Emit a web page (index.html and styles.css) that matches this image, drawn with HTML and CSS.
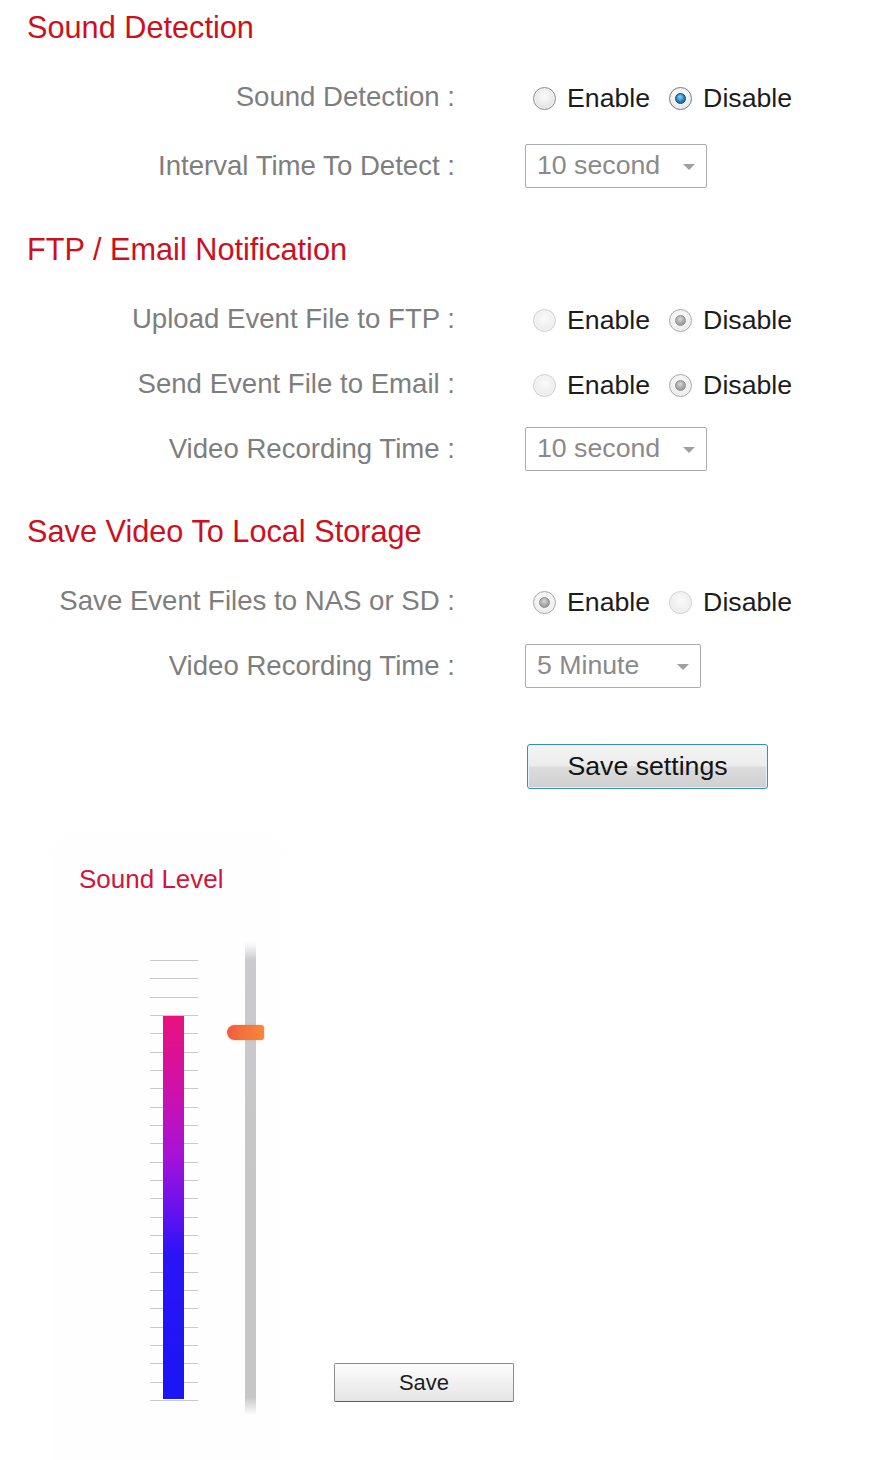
FILE: index.html
```html
<!DOCTYPE html>
<html lang="en">
<head>
<meta charset="utf-8">
<title>Sound Detection</title>
<link rel="stylesheet" href="styles.css">
</head>
<body>
<div class="page">
  <section class="section">
    <h2 class="section-title">Sound Detection</h2>
    <div class="rows">
      <div class="row">
        <div class="label">Sound Detection :</div>
        <div class="control radios">
          <label class="opt"><span class="radio"></span>Enable</label>
          <label class="opt"><span class="radio radio-on"></span>Disable</label>
        </div>
      </div>
      <div class="row row-gap">
        <div class="label">Interval Time To Detect :</div>
        <div class="control">
          <div class="select"><span class="select-value">10 second</span><span class="select-arrow"></span></div>
        </div>
      </div>
    </div>
  </section>

  <section class="section section-b">
    <h2 class="section-title">FTP / Email Notification</h2>
    <div class="rows">
      <div class="row">
        <div class="label">Upload Event File to FTP :</div>
        <div class="control radios">
          <label class="opt"><span class="radio radio-dis"></span>Enable</label>
          <label class="opt"><span class="radio radio-dis-on"></span>Disable</label>
        </div>
      </div>
      <div class="row">
        <div class="label">Send Event File to Email :</div>
        <div class="control radios">
          <label class="opt"><span class="radio radio-dis"></span>Enable</label>
          <label class="opt"><span class="radio radio-dis-on"></span>Disable</label>
        </div>
      </div>
      <div class="row">
        <div class="label">Video Recording Time :</div>
        <div class="control">
          <div class="select"><span class="select-value">10 second</span><span class="select-arrow"></span></div>
        </div>
      </div>
    </div>
  </section>

  <section class="section">
    <h2 class="section-title">Save Video To Local Storage</h2>
    <div class="rows">
      <div class="row">
        <div class="label">Save Event Files to NAS or SD :</div>
        <div class="control radios">
          <label class="opt"><span class="radio radio-dis-on"></span>Enable</label>
          <label class="opt"><span class="radio radio-dis"></span>Disable</label>
        </div>
      </div>
      <div class="row">
        <div class="label">Video Recording Time :</div>
        <div class="control">
          <div class="select select-narrow"><span class="select-value">5 Minute</span><span class="select-arrow"></span></div>
        </div>
      </div>
    </div>
  </section>

  <div class="actions">
    <button class="btn-primary" type="button">Save settings</button>
  </div>

  <div class="level-panel">
    <div class="level-title">Sound Level</div>
    <div class="level-body">
      <div class="meter">
        <div class="meter-bar" style="height:383px"></div>
      </div>
      <div class="slider">
        <div class="slider-track"></div>
        <div class="slider-thumb"></div>
      </div>
      <button class="btn-save" type="button">Save</button>
    </div>
  </div>
</div>
</body>
</html>
```

FILE: styles.css
```css
html, body {
  margin: 0;
  padding: 0;
  background: #ffffff;
}

body {
  font-family: "Liberation Sans", Arial, sans-serif;
}

.page {
  padding-top: 8px;
  width: 879px;
}

.section {
  margin-bottom: 32px;
}

.section-b {
  margin-bottom: 31px;
}

.section-title {
  margin: 0;
  padding-left: 27px;
  height: 40px;
  line-height: 40px;
  font-size: 30.7px;
  font-weight: normal;
  color: #cc1020;
}

.rows {
  margin-top: 16px;
  display: flex;
  flex-direction: column;
}

.row {
  display: grid;
  grid-template-columns: 455px 1fr;
  column-gap: 70px;
  align-items: center;
  height: 65px;
}

.row-gap {
  margin-top: 4px;
}

.label {
  text-align: right;
  font-size: 27.6px;
  color: #7e7e7e;
  white-space: nowrap;
}

.control {
  display: flex;
  align-items: center;
}

.radios {
  padding-left: 8px;
  gap: 19px;
  padding-top: 3px;
}

.opt {
  display: flex;
  align-items: center;
  gap: 11px;
  font-size: 26.7px;
  color: #1c1c1c;
}

.radio {
  position: relative;
  width: 21px;
  height: 21px;
  border-radius: 50%;
  border: 1px solid #8d8d8d;
  background: radial-gradient(circle at 50% 40%, #fbfbfb 0%, #e9e9e9 55%, #cfcfcf 100%);
  box-shadow: inset 0 0 0 1px #f4f4f4;
  flex: none;
}

.radio-on::after,
.radio-dis-on::after {
  content: "";
  position: absolute;
  left: 5px;
  top: 5px;
  width: 9px;
  height: 9px;
  border-radius: 50%;
}

.radio-on {
  border-color: #6f7a86;
  background: radial-gradient(circle at 50% 40%, #ffffff 0%, #eef1f4 55%, #c7ccd1 100%);
}

.radio-on::after {
  background: radial-gradient(circle at 45% 35%, #8fd0f5 0%, #2f8fcb 45%, #16507e 100%);
  border: 1px solid #1c3a58;
}

.radio-dis {
  border-color: #cfcfcf;
  background: radial-gradient(circle at 50% 40%, #fafafa 0%, #efefef 60%, #e1e1e1 100%);
}

.radio-dis-on {
  border-color: #a8a8a8;
  background: radial-gradient(circle at 50% 40%, #fdfdfd 0%, #efefef 60%, #d9d9d9 100%);
}

.radio-dis-on::after {
  background: radial-gradient(circle at 45% 35%, #d8d8d8 0%, #a6a6a6 55%, #8a8a8a 100%);
  border: 1px solid #8f8f8f;
}

.select {
  box-sizing: border-box;
  width: 182px;
  height: 44px;
  border: 1px solid #ababab;
  border-radius: 2px;
  display: flex;
  align-items: center;
  justify-content: space-between;
  padding: 0 11px 0 11px;
  background: #ffffff;
}

.select-narrow {
  width: 176px;
}

.select-value {
  font-size: 26.7px;
  color: #8a8a8a;
}

.select-arrow {
  width: 0;
  height: 0;
  border-left: 6px solid transparent;
  border-right: 6px solid transparent;
  border-top: 6px solid #a0a0a0;
  margin-top: 3px;
}

.actions {
  margin-top: 46px;
  padding-left: 527px;
  display: flex;
}

.btn-primary {
  box-sizing: border-box;
  width: 241px;
  height: 45px;
  border: 1px solid #3c8cc4;
  border-radius: 3px;
  background: linear-gradient(to bottom, #f4f4f4 0%, #ececec 48%, #dcdcdc 52%, #cfcfcf 100%);
  box-shadow: inset 0 0 0 1px #e4f2fb;
  font-family: "Liberation Sans", Arial, sans-serif;
  font-size: 26.7px;
  color: #141414;
  padding: 0;
}

.level-panel {
  margin-top: 52px;
  margin-left: 60px;
  width: 215px;
  height: 620px;
  padding-top: 18px;
  background: #fffefe;
  box-shadow: 0 0 16px rgba(220, 200, 200, 0.06);
}

.level-title {
  padding-left: 19px;
  height: 40px;
  line-height: 40px;
  font-size: 26px;
  color: #d0163c;
}

.level-body {
  margin-top: 43px;
  display: flex;
  align-items: flex-end;
  padding-left: 90px;
  width: 460px;
}

.meter {
  width: 48px;
  height: 441px;
  margin-bottom: 14px;
  display: flex;
  flex-direction: column;
  justify-content: flex-end;
  background: repeating-linear-gradient(to bottom, rgba(150, 150, 150, 0.5) 0px, rgba(150, 150, 150, 0.5) 1px, transparent 1px, transparent 18.33px);
}

.meter-bar {
  width: 21px;
  margin-left: 13px;
  margin-bottom: 2px;
  background: linear-gradient(to bottom, #e8127c 0%, #d011a8 18%, #a812d6 36%, #6a12ee 50%, #2a14f6 62%, #1a16f4 100%);
}

.slider {
  position: relative;
  width: 37px;
  height: 473px;
  margin-left: 29px;
}

.slider-track {
  width: 11px;
  height: 100%;
  margin-left: 18px;
  background: linear-gradient(to bottom, rgba(200, 200, 206, 0) 0px, #cbcbcf 18px, #c6c6c6 50%, #c6c6c6 calc(100% - 18px), rgba(200, 200, 200, 0) 100%);
}

.slider-thumb {
  position: absolute;
  left: 0;
  top: 83px;
  width: 37px;
  height: 15px;
  border-radius: 8px 3px 3px 8px;
  background: linear-gradient(to right, #ee5a44 0%, #f3703c 40%, #f5893a 100%);
  box-shadow: 0 0 2px rgba(240, 120, 60, 0.5);
}

.btn-save {
  box-sizing: border-box;
  width: 180px;
  height: 39px;
  margin-left: 70px;
  margin-bottom: 13px;
  border: 1px solid #8c8c8c;
  border-bottom-color: #5e5e5e;
  border-radius: 2px;
  background: linear-gradient(to bottom, #fdfdfd 0%, #f1f1f1 50%, #e4e4e4 100%);
  font-family: "Liberation Sans", Arial, sans-serif;
  font-size: 22px;
  color: #1e1e1e;
  padding: 0;
  flex: none;
}
```
